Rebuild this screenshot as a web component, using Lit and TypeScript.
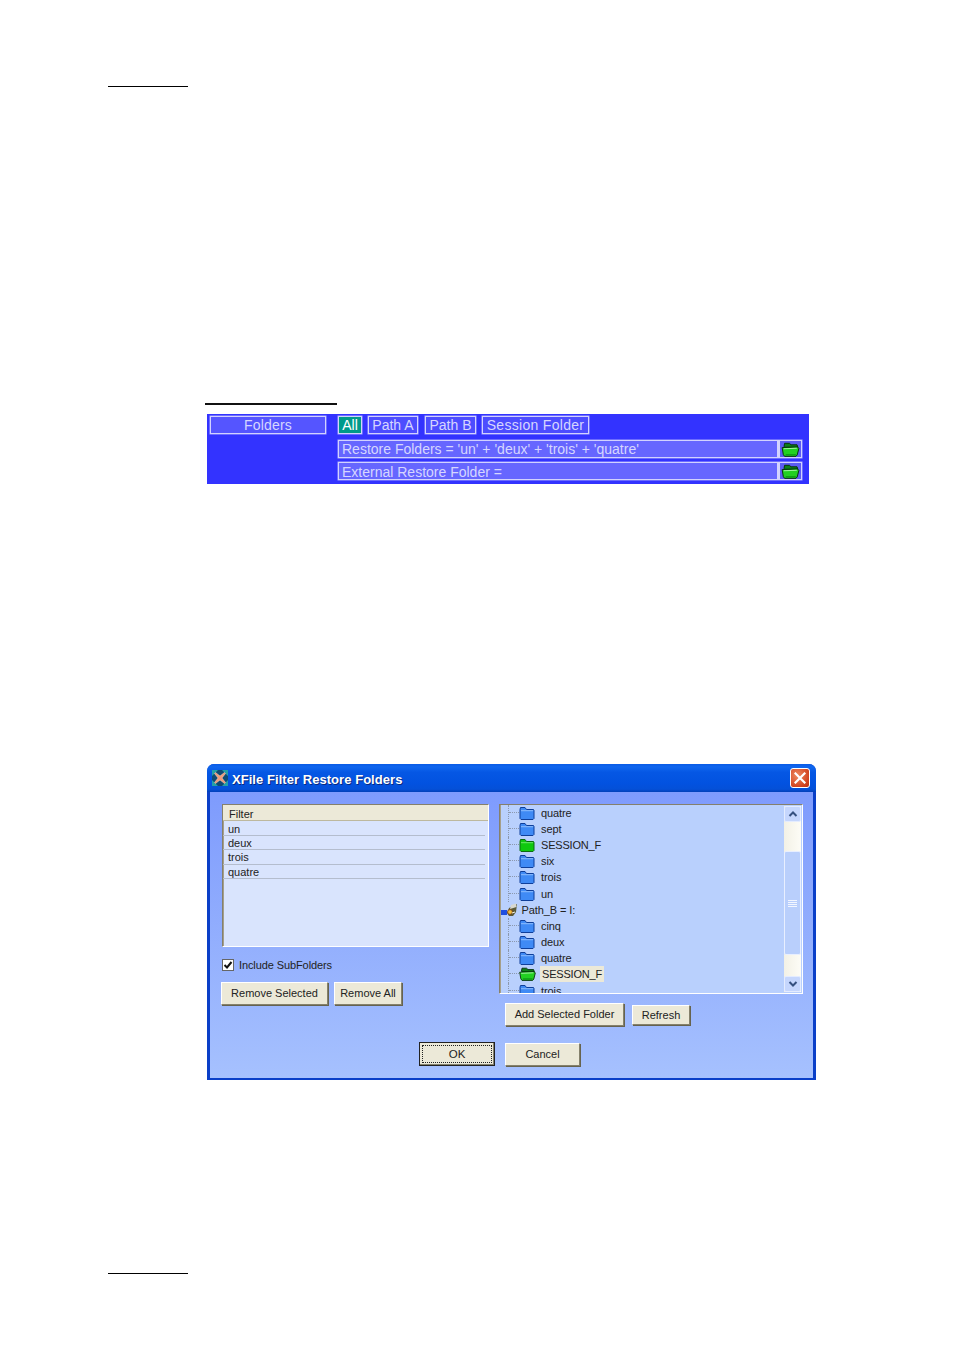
import { LitElement, html, css, svg } from "lit";
import { customElement } from "lit/decorators.js";

const folder = (kind: "blue" | "green") => {
  const f = kind === "blue" ? "#3f8af5" : "#0fc80f";
  const top = kind === "blue" ? "#7db2fb" : "#58e058";
  const s = kind === "blue" ? "#0f3f9a" : "#0a6a12";
  return svg`<svg class="ficon" width="16" height="14" viewBox="0 0 16 14">
    <path d="M1 3.5 L1.5 1.5 L6 1.5 L7.5 3.5 L14.5 3.5 L15 4.5 L15 12.5 L14 13.5 L2 13.5 L1 12.5 Z" fill="${f}" stroke="${s}" stroke-width="1"/>
    <path d="M2 4.6 H14" stroke="${top}" stroke-width="1.2"/>
  </svg>`;
};

const openGreen = (w = 17, h = 14) => svg`<svg class="ficon" width="${w}" height="${h}" viewBox="0 0 17 14">
  <path d="M2.5 4 L3 1.2 L7.5 1.2 L9 2.6 L14.6 2.6 L15.4 5 L3 5 Z" fill="#0b7f18" stroke="#052f0a" stroke-width="0.9"/>
  <path d="M0.7 5.2 L15 4.6 L16.3 6 L14.8 12 L13.6 13.4 L3 13.4 L1.8 11.8 Z" fill="#22d022" stroke="#052f0a" stroke-width="0.9"/>
  <path d="M2.2 6.3 L14.4 5.8" stroke="#a0f5a0" stroke-width="1"/>
  <path d="M4 12 L13.5 12" stroke="#0f9a18" stroke-width="1.4"/>
</svg>`;

const drive = svg`<svg class="drive" width="17" height="14" viewBox="0 0 17 14">
  <rect x="0" y="7" width="6" height="5" fill="#1f4fe0"/>
  <path d="M8 5 L16 1 L15 9 L12 13 L8 13 L6 10 Z" fill="#5a5a3a"/>
  <path d="M10 2 L15 0.5 L15.5 4 L9 6 Z" fill="#d8d8d0"/>
  <circle cx="9" cy="9" r="2.4" fill="#f2c040" stroke="#7a3a10" stroke-width="0.8"/>
  <path d="M11 10 L14 9" stroke="#f3f0e0" stroke-width="1"/>
</svg>`;

const appIcon = svg`<svg width="18" height="18" viewBox="0 0 18 18">
  <rect x="1" y="1" width="16" height="16" rx="1" fill="#0f4a74"/>
  <path d="M1 1 L7 1 L1 7 Z M17 1 L11 1 L17 7 Z M1 17 L7 17 L1 11 Z M17 17 L11 17 L17 11 Z" fill="#23a0a8"/>
  <path d="M4.5 3.5 L9 7 L13.5 3.5 L14.5 4.5 L11 9 L14.5 13.5 L13.5 14.5 L9 11 L4.5 14.5 L3.5 13.5 L7 9 L3.5 4.5 Z" fill="#ee9a78" stroke="#f8d8c8" stroke-width="0.5"/>
</svg>`;

type TreeRow = { name: string; icon: "blue" | "green" | "open"; sel?: boolean };
const before: TreeRow[] = [
  { name: "quatre", icon: "blue" },
  { name: "sept", icon: "blue" },
  { name: "SESSION_F", icon: "green" },
  { name: "six", icon: "blue" },
  { name: "trois", icon: "blue" },
  { name: "un", icon: "blue" },
];
const after: TreeRow[] = [
  { name: "cinq", icon: "blue" },
  { name: "deux", icon: "blue" },
  { name: "quatre", icon: "blue" },
  { name: "SESSION_F", icon: "open", sel: true },
  { name: "trois", icon: "blue" },
];

@customElement("app-root")
export class AppRoot extends LitElement {
  static styles = css`
    :host { display: block; background: #fff; font-family: "Liberation Sans", Arial, sans-serif; }
    .page { width: 954px; height: 1350px; padding-top: 86px; box-sizing: border-box; overflow: hidden; background: #fff; }
    .rule { background: #000; }
    .r1 { margin-left: 108px; width: 80px; height: 1px; }
    .r2 { margin: 316px 0 0 205px; width: 132px; height: 2px; background: #111; }
    .r3 { margin: 193px 0 0 108px; width: 80px; height: 1px; }

    .panel { margin: 9px 0 0 207px; width: 602px; height: 70px; box-sizing: border-box; background: #3333ff; display: flex; padding: 2px 7px 0 3px; color: #d6d6ff; font-size: 14px; }
    .pbox { border: 1px solid #d2d2ff; box-shadow: 0 0 0 0.5px #a8a8ff; box-sizing: border-box; height: 18px; line-height: 16px; white-space: nowrap; }
    .plabel { width: 116px; background: #5555ff; text-align: center; letter-spacing: 0.2px; }
    .pright { margin-left: 12px; width: 464px; display: flex; flex-direction: column; }
    .tabs { display: flex; }
    .tab { background: #4d4dff; text-align: center; margin-right: 6px; }
    .tab.active { background: #009a8a; color: #fff; }
    .tab.all { width: 24px; }
    .tab.pa { width: 50px; margin-right: 7px; }
    .tab.pb { width: 51px; }
    .tab.sf { width: 107px; margin-right: 0; letter-spacing: 0.3px; }
    .pfield { display: flex; background: #6666ff; margin-top: 6px; align-items: stretch; }
    .pfield + .pfield { margin-top: 4px; }
    .pfield + .pfield .txt { line-height: 18px; }
    .pfield .txt { flex: 1; padding-left: 3px; border-right: 3px solid #d2d2ff; overflow: hidden; }
    .pfield .btn { width: 21px; background: #5c5cf4; display: flex; align-items: center; justify-content: center; }
    .pfield .btn .ficon { margin: 0; }

    .dialog { margin: 280px 0 0 207px; width: 609px; height: 316px; box-sizing: border-box; border-radius: 7px 7px 0 0; overflow: hidden; background: #0a3fc8; display: flex; flex-direction: column; font-size: 11px; color: #222; }
    .title { height: 28px; flex: none; display: flex; align-items: center; padding: 0 6px 0 4px; background: linear-gradient(#0a5be6 0%, #0f66ee 10%, #0557e4 30%, #0252e0 70%, #0450d8 90%, #0240b8 100%); color: #fff; font-weight: bold; font-size: 13px; letter-spacing: 0.05px; text-shadow: 1px 1px 0 #0a2a80; }
    .title .name { margin-left: 3px; padding-top: 2px; flex: 1; }
    .close { width: 20px; height: 20px; border: 1px solid #fff; border-radius: 3px; background: radial-gradient(circle at 35% 35%, #ee8a60, #d0401c 75%, #b83010); display: flex; align-items: center; justify-content: center; box-sizing: border-box; }
    .client { flex: 1; margin: 0 3px 2px 3px; background: linear-gradient(#7e9bfd, #a6c1fe); padding: 12px 10px 0 12px; }
    .cols { display: flex; gap: 10px; }
    .col-l { width: 267px; }
    .col-r { width: 304px; }

    .list { height: 143px; box-sizing: border-box; background: #d9e4fd; border: 1px solid; border-color: #85806c #fff #fff #85806c; box-shadow: inset 1px 0 0 #a59f8a; }
    .lhead { height: 15px; line-height: 18px; background: #ece9d8; border-bottom: 1px solid #bdb89e; padding-left: 6px; margin-bottom: 1px; }
    .lrow { height: 14.2px; line-height: 14px; margin-right: 3px; padding-left: 5px; box-sizing: border-box; border-bottom: 1px solid #b4bdce; }
    .check { display: flex; align-items: center; margin-top: 12px; height: 12px; }
    .box { width: 12px; height: 12px; box-sizing: border-box; background: #fff; border: 1px solid #666; display: flex; align-items: center; justify-content: center; }
    .check span { margin-left: 5px; letter-spacing: -0.1px; }
    .lbtns { display: flex; gap: 6px; margin: 11px 0 0 -1px; }

    .b { box-sizing: border-box; background: #ece9d8; height: 23px; line-height: 21px; text-align: center; border: 1px solid; border-color: #fff #85816c #85816c #fff; box-shadow: 1px 1px 0 #66634f; color: #222; white-space: nowrap; }
    .w-rs { width: 107px; } .w-ra { width: 68px; } .w-as { width: 119px; } .w-rf { width: 58px; height: 20px; line-height: 18px; }
    .w-cn { width: 75px; margin-top: 1px; line-height: 20px; }
    .ok { width: 76px; height: 24px; background: #ece9d8; border: 1px solid #222; box-sizing: border-box; padding: 2px; box-shadow: inset -1px -1px 0 #85816c; }
    .ok div { height: 100%; box-sizing: border-box; border: 1px dotted #222; text-align: center; line-height: 16px; font-size: 11.5px; }

    .tree { height: 190px; box-sizing: border-box; background: #b9d0fd; border: 1px solid; border-color: #85806c #fff #fff #85806c; box-shadow: inset 1px 0 0 #a59f8a; display: flex; overflow: hidden; }
    .items { flex: 1; margin-top: -0.5px; overflow: hidden; }
    .trow { height: 16.2px; display: flex; align-items: center; }
    .conn { margin-left: 8px; width: 11px; height: 100%; border-left: 1px dotted #8b98ae; box-sizing: border-box; flex: none; }
    .conn div { height: 50%; border-bottom: 1px dotted #8b98ae; box-sizing: border-box; }
    .ficon { flex: none; margin-right: 6px; }
    .tname { line-height: 16px; padding: 0 2px; margin-left: -2px; letter-spacing: -0.1px; }
    .tname.caps { letter-spacing: -0.2px; }
    .tname.sel { background: #ece9d8; }
    .root { margin-left: 0.5px; }
    .drive { flex: none; margin-right: 4px; }
    .sbar { width: 17px; margin: 1px 1px 1px 0; flex: none; background: linear-gradient(90deg, #f3f1e6, #fdfcf6); display: flex; flex-direction: column; }
    .sbtn { height: 16px; flex: none; background: #c5d6fd; border: 1px solid #e4ecff; border-radius: 2px; box-sizing: border-box; display: flex; align-items: center; justify-content: center; }
    .strack { flex: 1; padding: 29px 0 21px; display: flex; }
    .thumb { flex: 1; background: #b9cffc; border: 1px solid #e8efff; border-radius: 2px; display: flex; align-items: center; justify-content: center; }
    .rbtns { display: flex; align-items: center; gap: 8px; margin: 9px 0 0 6px; }
    .okrow { display: flex; gap: 10px; align-items: flex-start; margin: 16px 0 0 197px; }
  `;

  private row(r: TreeRow) {
    return html`<div class="trow">
      <div class="conn"><div></div></div>
      ${r.icon === "open" ? openGreen() : folder(r.icon)}
      <span class="tname ${r.name === "SESSION_F" ? "caps" : ""} ${r.sel ? "sel" : ""}">${r.name}</span>
    </div>`;
  }

  render() {
    return html`<div class="page">
      <div class="rule r1"></div>
      <div class="rule r2"></div>

      <div class="panel">
        <div class="pbox plabel">Folders</div>
        <div class="pright">
          <div class="tabs">
            <div class="pbox tab active all">All</div>
            <div class="pbox tab pa">Path A</div>
            <div class="pbox tab pb">Path B</div>
            <div class="pbox tab sf">Session Folder</div>
          </div>
          <div class="pbox pfield"><div class="txt">Restore Folders = 'un' + 'deux' + 'trois' + 'quatre'</div><div class="btn">${openGreen(19, 15)}</div></div>
          <div class="pbox pfield"><div class="txt">External Restore Folder =</div><div class="btn">${openGreen(19, 15)}</div></div>
        </div>
      </div>

      <div class="dialog">
        <div class="title">
          ${appIcon}
          <span class="name">XFile Filter Restore Folders</span>
          <div class="close"><svg width="12" height="12" viewBox="0 0 12 12"><path d="M1.5 1.5 L10.5 10.5 M10.5 1.5 L1.5 10.5" stroke="#fff" stroke-width="2.2" stroke-linecap="square"/></svg></div>
        </div>
        <div class="client">
          <div class="cols">
            <div class="col-l">
              <div class="list">
                <div class="lhead">Filter</div>
                ${["un", "deux", "trois", "quatre"].map((t) => html`<div class="lrow">${t}</div>`)}
              </div>
              <div class="check">
                <div class="box"><svg width="10" height="10" viewBox="0 0 10 10"><path d="M1.5 5 L4 7.5 L8.5 2" fill="none" stroke="#111" stroke-width="2"/></svg></div>
                <span>Include SubFolders</span>
              </div>
              <div class="lbtns">
                <div class="b w-rs">Remove Selected</div>
                <div class="b w-ra">Remove All</div>
              </div>
            </div>
            <div class="col-r">
              <div class="tree">
                <div class="items">
                  ${before.map((r) => this.row(r))}
                  <div class="trow root">${drive}<span class="tname">Path_B = I:</span></div>
                  ${after.map((r) => this.row(r))}
                </div>
                <div class="sbar">
                  <div class="sbtn"><svg width="10" height="8" viewBox="0 0 10 8"><path d="M1.5 6 L5 2.5 L8.5 6" fill="none" stroke="#35507f" stroke-width="2"/></svg></div>
                  <div class="strack"><div class="thumb"><svg width="9" height="9" viewBox="0 0 9 9"><path d="M0 1.5 H9 M0 3.5 H9 M0 5.5 H9 M0 7.5 H9" stroke="#f2f6ff" stroke-width="1"/></svg></div></div>
                  <div class="sbtn"><svg width="10" height="8" viewBox="0 0 10 8"><path d="M1.5 2 L5 5.5 L8.5 2" fill="none" stroke="#35507f" stroke-width="2"/></svg></div>
                </div>
              </div>
              <div class="rbtns">
                <div class="b w-as">Add Selected Folder</div>
                <div class="b w-rf">Refresh</div>
              </div>
            </div>
          </div>
          <div class="okrow">
            <div class="ok"><div>OK</div></div>
            <div class="b w-cn">Cancel</div>
          </div>
        </div>
      </div>

      <div class="rule r3"></div>
    </div>`;
  }
}
